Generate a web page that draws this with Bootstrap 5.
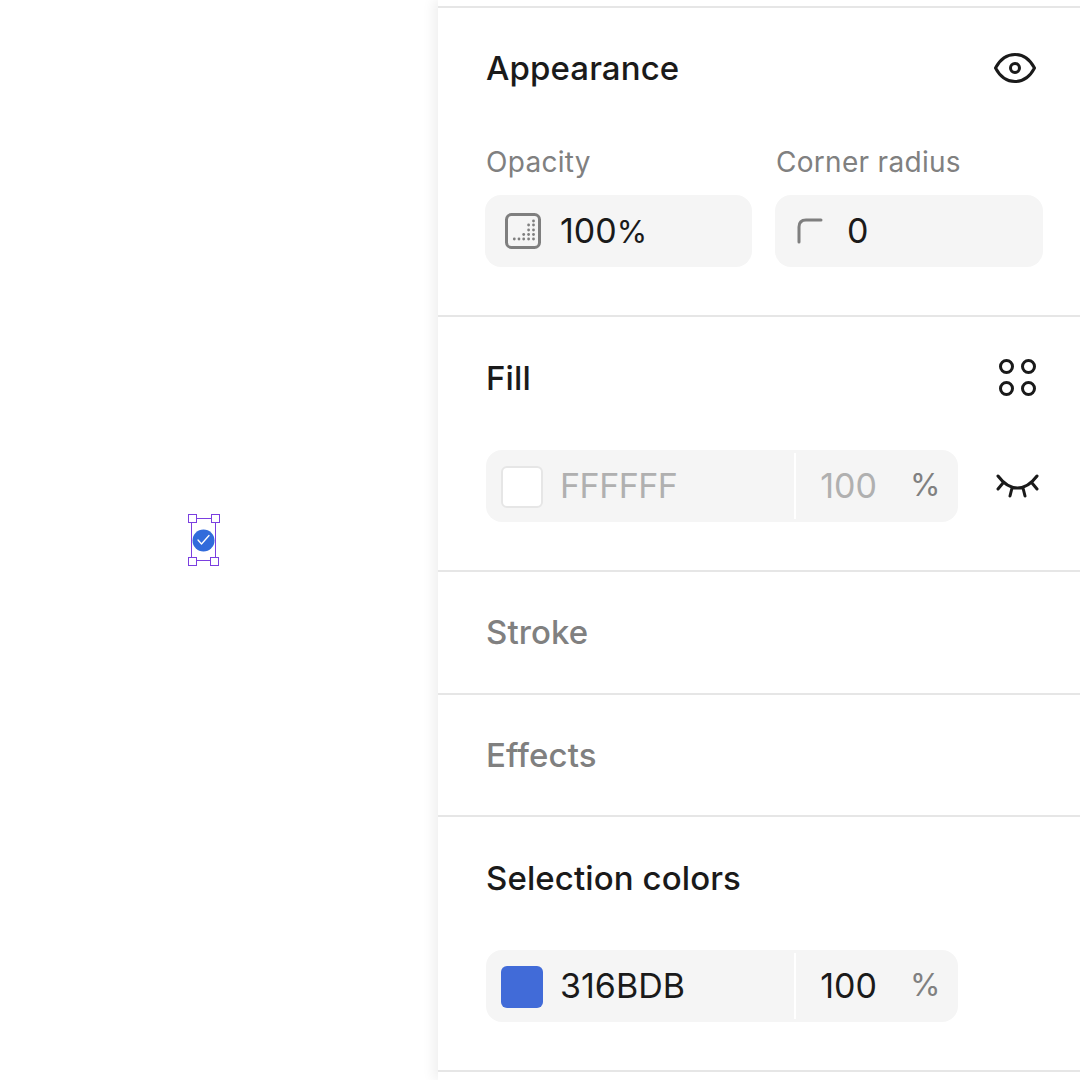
<!DOCTYPE html>
<html lang="en">
<head>
  <meta charset="UTF-8" />
  <title>Design panel</title>
  <link href="https://cdn.jsdelivr.net/npm/bootstrap@5.3.0/dist/css/bootstrap.min.css" rel="stylesheet"/>
  <style>
    html, body { height: 100%; overflow: hidden; background: #fff; }
    body { font-family: Inter, "Liberation Sans", sans-serif; color: #1a1a1a; }
    .canvas-area { width: 438px; height: 1080px; position: relative; flex: none; }
    .sel-box { position: absolute; left: 191px; top: 518px; width: 25px; height: 43px; border: 1px solid #7b3fe0; }
    .sel-dot { position: absolute; left: 192px; top: 529px; width: 23px; height: 23px; }
    .sel-handle { position: absolute; width: 9px; height: 9px; background: #fff; border: 1px solid #7b3fe0; }
    .hd-tl { left: 188px; top: 514px; }
    .hd-tr { left: 211px; top: 514px; }
    .hd-bl { left: 188px; top: 557px; }
    .hd-br { left: 210px; top: 557px; }
    .side-panel { flex: 1; height: 1080px; padding-top: 6px; box-shadow: -4px 0 12px rgba(0,0,0,.07); background: #fff; }
    .panel-sec { border-top: 2px solid #e6e6e6; padding: 0 37px 0 48px; }
    .sec-appearance { height: 309px; padding-top: 39px; }
    .sec-fill { height: 255px; padding-top: 40px; }
    .sec-empty { height: 122.5px; padding-top: 39px; }
    .sec-colors { height: 255px; padding-top: 40px; }
    .sec-title { font-size: 33px; line-height: 42px; font-weight: 500; letter-spacing: .1px; margin: 0; height: 44px; }
    .sec-title.muted { color: #808080; }
    .field-label { font-size: 28px; line-height: 32px; letter-spacing: .3px; color: #808080; margin-bottom: 17px; padding-left: 1px; }
    .field-box { height: 72px; background: #f5f5f5; border-radius: 16px; font-size: 34px; }
    .field-box > span { margin-bottom: 2px; }
    .field-pair { margin-top: 55px; margin-left: -1px; gap: 23px; }
    .field-half { width: 267px; flex: none; }
    .field-rest { flex: 1; }
    .pct-small { font-size: 31px; }
    .ico-opacity { margin-left: 20px; margin-right: 19px; }
    .ico-corner { margin-left: 22px; margin-right: 24px; }
    .color-row { margin-top: 49px; }
    .color-box { width: 472px; flex: none; padding-left: 15px; }
    .swatch { width: 42px; height: 42px; border-radius: 6px; margin: 1px 17px 0 0; flex: none; }
    .swatch-white { background: #fff; border: 2px solid #e6e6e6; }
    .swatch-blue { background: #416bd8; }
    .color-split { width: 2px; height: 66px; background: #fff; margin-left: auto; flex: none; }
    .pct-val { width: 81px; text-align: right; flex: none; }
    .pct-sign { width: 81px; text-align: left; padding-left: 33px; flex: none; color: #808080; font-size: 31px; }
    .faded { color: #b0b0b0; }
    .hex-faded { letter-spacing: -.5px; }
    .panel-ico { flex: none; display: block; }
    .ico-eye { margin-right: 7px; margin-bottom: 3px; }
    .ico-dots { margin-right: 7px; margin-bottom: 3px; }
    .ico-lash { margin-right: 3px; }
  </style>
</head>
<body>
  <div class="d-flex">
    <div class="canvas-area">
      <div class="sel-box"></div>
      <svg class="sel-dot" viewBox="0 0 23 23">
        <circle cx="11.5" cy="11.5" r="11" fill="#316bdb"/>
        <path d="M6 11l3.500 4L17 6.500" fill="none" stroke="#fff" stroke-width="1.3" stroke-linecap="round" stroke-linejoin="round"/>
      </svg>
      <div class="sel-handle hd-tl"></div>
      <div class="sel-handle hd-tr"></div>
      <div class="sel-handle hd-bl"></div>
      <div class="sel-handle hd-br"></div>
    </div>

    <div class="side-panel">
      <!-- Appearance -->
      <section class="panel-sec sec-appearance">
        <div class="d-flex justify-content-between align-items-center">
          <h2 class="sec-title">Appearance</h2>
          <svg class="panel-ico ico-eye" width="42" height="30" viewBox="0 0 42 30">
            <path d="M1.500 15C6 6.500 13 1.500 21 1.500S36 6.500 40.500 15C36 23.500 29 28.500 21 28.500S6 23.500 1.500 15Z" fill="none" stroke="#1a1a1a" stroke-width="3" stroke-linejoin="round"/>
            <circle cx="21" cy="15" r="4.500" fill="none" stroke="#1a1a1a" stroke-width="3"/>
          </svg>
        </div>
        <div class="d-flex field-pair">
          <div class="field-half">
            <div class="field-label">Opacity</div>
            <div class="field-box d-flex align-items-center">
              <svg class="panel-ico ico-opacity" width="36" height="36" viewBox="0 0 36 36">
                <rect x="1.500" y="1.500" width="33" height="33" rx="5" fill="none" stroke="#7f7f7f" stroke-width="3"/>
                <g fill="#7f7f7f">
                  <circle cx="9.300" cy="26" r="1.400"/><circle cx="14" cy="26" r="1.400"/><circle cx="18.700" cy="26" r="1.400"/><circle cx="23.600" cy="26" r="1.400"/><circle cx="28.500" cy="26" r="1.400"/>
                  <circle cx="18.700" cy="21.500" r="1.400"/><circle cx="23.600" cy="21.500" r="1.400"/><circle cx="28.500" cy="21.500" r="1.400"/>
                  <circle cx="23.600" cy="17" r="1.400"/><circle cx="28.500" cy="17" r="1.400"/>
                  <circle cx="23.600" cy="12" r="1.400"/><circle cx="28.500" cy="12" r="1.400"/>
                  <circle cx="28.500" cy="8" r="1.400"/>
                </g>
              </svg>
              <span>100<span class="pct-small">%</span></span>
            </div>
          </div>
          <div class="field-rest">
            <div class="field-label">Corner radius</div>
            <div class="field-box d-flex align-items-center">
              <svg class="panel-ico ico-corner" width="26" height="26" viewBox="0 0 26 26">
                <path d="M2 24V9Q2 2 9 2H24" fill="none" stroke="#7f7f7f" stroke-width="3" stroke-linecap="round"/>
              </svg>
              <span>0</span>
            </div>
          </div>
        </div>
      </section>

      <!-- Fill -->
      <section class="panel-sec sec-fill">
        <div class="d-flex justify-content-between align-items-center">
          <h2 class="sec-title">Fill</h2>
          <svg class="panel-ico ico-dots" width="37" height="37" viewBox="0 0 37 37">
            <g fill="none" stroke="#1a1a1a" stroke-width="3"><circle cx="7.500" cy="7.500" r="6"/><circle cx="29.500" cy="7.500" r="6"/><circle cx="7.500" cy="29.500" r="6"/><circle cx="29.500" cy="29.500" r="6"/></g>
          </svg>
        </div>
        <div class="d-flex justify-content-between align-items-center color-row">
          <div class="field-box color-box d-flex align-items-center">
            <div class="swatch swatch-white"></div>
            <span class="faded hex-faded">FFFFFF</span>
            <div class="color-split"></div>
            <span class="pct-val faded">100</span>
            <span class="pct-sign">%</span>
          </div>
          <svg class="panel-ico ico-lash" width="44" height="26" viewBox="0 0 44 26">
            <path d="M2 3C8 11 14 15 21.500 15S35 11 41 3M7 10L2 16M16 15L14 23M27 15L29 23M36 10L41 16" fill="none" stroke="#1a1a1a" stroke-width="3" stroke-linecap="round"/>
          </svg>
        </div>
      </section>

      <section class="panel-sec sec-empty"><h2 class="sec-title muted">Stroke</h2></section>
      <section class="panel-sec sec-empty"><h2 class="sec-title muted">Effects</h2></section>

      <!-- Selection colors -->
      <section class="panel-sec sec-colors">
        <h2 class="sec-title">Selection colors</h2>
        <div class="d-flex color-row">
          <div class="field-box color-box d-flex align-items-center">
            <div class="swatch swatch-blue"></div>
            <span>316BDB</span>
            <div class="color-split"></div>
            <span class="pct-val">100</span>
            <span class="pct-sign">%</span>
          </div>
        </div>
      </section>
      <section class="panel-sec"></section>
    </div>
  </div>
</body>
</html>
